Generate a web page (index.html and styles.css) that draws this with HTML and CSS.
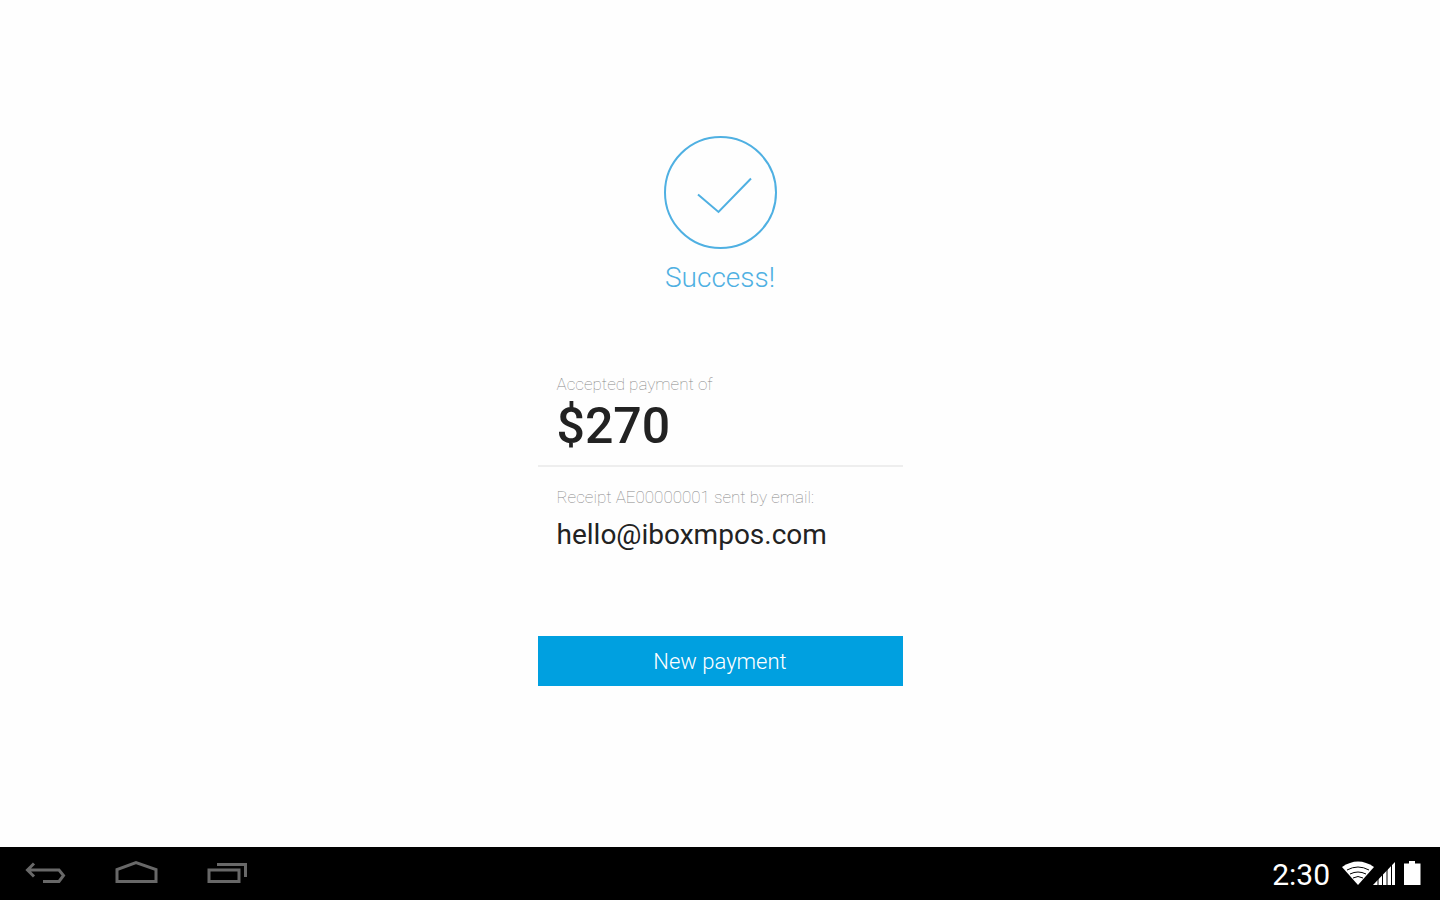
FILE: index.html
```html
<!DOCTYPE html>
<html lang="en">
<head>
  <meta charset="UTF-8">
  <meta name="viewport" content="width=device-width, initial-scale=1">
  <title>Payment accepted</title>
  <link rel="stylesheet" href="styles.css">
</head>
<body>

  <main class="screen">
    <div class="status">
      <svg class="status-icon" viewBox="0 0 114 114" aria-hidden="true">
        <circle cx="57.5" cy="57.5" r="55.5"/>
        <path d="M35 59.5 L55.5 77 L88 43.5"/>
      </svg>
      <h1 class="status-title">Success!</h1>
    </div>

    <section class="details">
      <div class="row">
        <p class="label">Accepted payment of</p>
        <p class="amount">$270</p>
      </div>
      <div class="row">
        <p class="label">Receipt AE00000001 sent by email:</p>
        <p class="email">hello@iboxmpos.com</p>
      </div>
    </section>

    <button type="button" class="new-payment">New payment</button>
  </main>

  <footer class="system-bar">
    <nav class="nav-buttons">
      <button type="button" class="nav-button" aria-label="Back">
        <svg width="44" height="28" viewBox="0 0 44 28">
          <path d="M10 3.5 L3.5 10 L10 16.5 M3.5 10 H35 L39.5 15.5 L35 21.5 H19"/>
        </svg>
      </button>
      <button type="button" class="nav-button" aria-label="Home">
        <svg width="44" height="28" viewBox="0 0 44 28">
          <path d="M2 21.5 V9.5 L21 2.5 L41 9.5 V21.5 Z"/>
        </svg>
      </button>
      <button type="button" class="nav-button" aria-label="Recent apps">
        <svg width="44" height="28" viewBox="0 0 44 28">
          <path d="M3 10 H33 V21.5 H3 Z"/>
          <path d="M11 4.5 H39.5 V17"/>
        </svg>
      </button>
    </nav>

    <div class="indicators">
      <span class="clock">2:30</span>
      <svg width="80" height="28" viewBox="0 0 80 28" aria-hidden="true">
        <!-- wifi -->
        <path class="solid" d="M-1 7 Q15 -4 31 7 L15 25 Z"/>
        <path class="gap" d="M4 10 Q15 4 26 10 M7 14 Q15 10 23 14 M10 18 Q15 15 20 18"/>
        <!-- signal -->
        <path class="solid" d="M30 25 L52 2 V25 Z"/>
        <path class="gap" d="M35 17 V25 M39.5 13 V25 M44 8 V25 M48.5 5 V25"/>
        <!-- battery -->
        <path class="solid" d="M61 3.5 H66 V1 H72 V3.5 H77.5 V25 H61 Z"/>
      </svg>
    </div>
  </footer>

</body>
</html>
```
FILE: styles.css
```css
body {
  display: flex;
  flex-direction: column;
  min-height: 100vh;
  margin: 0;
  background-color: #fefefe;
  color: #222;
  font-family: Roboto, "Noto Sans", sans-serif;
}

h1, p {
  margin: 0;
}

button {
  border: none;
  font-family: inherit;
  cursor: pointer;
}

.screen {
  flex: 1;
  display: flex;
  flex-direction: column;
  align-items: center;
  padding: 135px 16px 32px;
}

/* Success mark */
.status {
  display: flex;
  flex-direction: column;
  align-items: center;
  gap: 13px;
}

.status-icon {
  width: 114px;
  height: 114px;
  fill: none;
  stroke: #4fb0e2;
  stroke-width: 2;
}

.status-title {
  font-size: 28px;
  line-height: 32px;
  font-weight: 300;
  color: #4fb0e2;
}

/* Payment details */
.details {
  width: 100%;
  max-width: 365px;
  margin-top: 72px;
}

.row {
  padding: 20px 19px;
}

.row:first-child {
  padding-top: 8px;
  padding-bottom: 15px;
  border-bottom: 2px solid #eee;
}

.row:first-child .label {
  margin-bottom: 8px;
}

.label {
  margin-bottom: 12px;
  font-size: 17px;
  line-height: 20px;
  font-weight: 100;
  color: #888;
}

.amount {
  font-size: 50px;
  line-height: 48px;
  font-weight: 500;
}

.email {
  font-size: 28px;
  line-height: 32px;
}

.new-payment {
  width: 100%;
  max-width: 365px;
  height: 50px;
  margin-top: 65px;
  background-color: #00a0e0;
  color: #fff;
  font-size: 22px;
  font-weight: 300;
}

/* Android system bar */
.system-bar {
  display: flex;
  align-items: center;
  justify-content: space-between;
  height: 53px;
  padding: 0 17px 0 24px;
  background-color: #000;
  color: #fff;
}

.nav-buttons {
  display: flex;
  gap: 47px;
}

.nav-button {
  display: flex;
  padding: 0;
  background: none;
}

.nav-button svg {
  fill: none;
  stroke: #686868;
  stroke-width: 3;
}

.indicators {
  display: flex;
  align-items: center;
  gap: 13px;
}

.indicators svg {
  overflow: visible;
}

.clock {
  padding-top: 2px;
  font-size: 30px;
  line-height: 32px;
}

.solid {
  fill: #fff;
}

.gap {
  fill: none;
  stroke: #000;
  stroke-width: 1;
}
```
